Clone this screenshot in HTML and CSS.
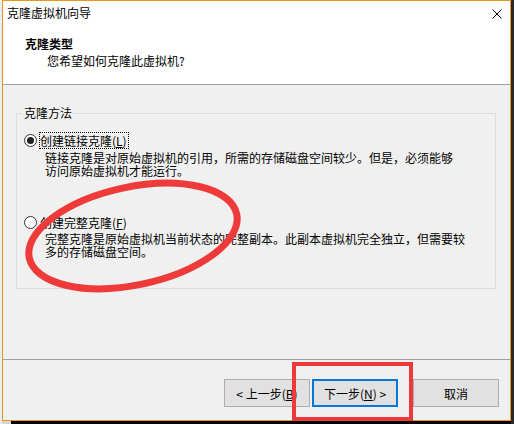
FILE: index.html
```html
<!DOCTYPE html>
<html lang="zh-CN">
<head>
<meta charset="utf-8">
<title>克隆虚拟机向导</title>
<link rel="stylesheet" href="styles.css">
</head>
<body>
<div class="screen">
  <div class="edge-left"></div>
  <div class="col">
    <div class="window">
      <div class="header">
        <div class="titlebar">
          <span class="title">克隆虚拟机向导</span>
          <svg class="close" width="10" height="10" viewBox="0 0 10 10"><path d="M0.5 0.5L9.5 9.5M9.5 0.5L0.5 9.5" stroke="#000" stroke-width="1" fill="none"/></svg>
        </div>
        <div class="head-title">克隆类型</div>
        <div class="head-sub">您希望如何克隆此虚拟机?</div>
      </div>
      <div class="content">
        <div class="group">
          <span class="legend">克隆方法</span>
          <div class="radio-row">
            <span class="radio checked"></span>
            <span class="label focus">创建链接克隆(<u>L</u>)</span>
          </div>
          <div class="desc">链接克隆是对原始虚拟机的引用，所需的存储磁盘空间较少。但是，必须能够<br>访问原始虚拟机才能运行。</div>
          <div class="radio-row second">
            <span class="radio"></span>
            <span class="label">创建完整克隆(<u>F</u>)</span>
          </div>
          <div class="desc desc2">完整克隆是原始虚拟机当前状态的完整副本。此副本虚拟机完全独立，但需要较<br>多的存储磁盘空间。</div>
        </div>
      </div>
      <div class="footer">
        <button class="btn">&lt; 上一步(<u>B</u>)</button>
        <button class="btn default">下一步(<u>N</u>) &gt;</button>
        <button class="btn cancel">取消</button>
      </div>
    </div>
    <div class="edge-bottom"></div>
  </div>
  <div class="edge-right"></div>
  <svg class="annot" width="514" height="424" viewBox="0 0 514 424">
    <ellipse cx="133" cy="236" rx="106" ry="49" transform="rotate(-12 133 236)" fill="none" stroke="#ef3a3a" stroke-width="7"/>
    <rect x="294" y="364" width="117" height="55" fill="none" stroke="#ec3a3a" stroke-width="4"/>
  </svg>
</div>
</body>
</html>
```
FILE: styles.css
```css
* { box-sizing: border-box; }
html, body { margin: 0; padding: 0; }
body {
  font-family: "Noto Sans CJK SC", "Noto Sans", sans-serif;
  font-size: 12px;
  color: #000;
  background: #000;
}
.screen {
  position: relative;
  width: 514px;
  height: 424px;
  display: flex;
  background: #000;
  overflow: hidden;
}
.edge-left { width: 2px; background: #ececec; }
.edge-right { width: 3px; background: #2b2b2b; }
.col { width: 509px; display: flex; flex-direction: column; }
.edge-bottom {
  flex: 1;
  background: linear-gradient(to right, #d6d6d6 0 9px, #000 9px);
}
.window {
  height: 421px;
  border: 1px solid #e8951c;
  background: #f0f0f0;
  display: flex;
  flex-direction: column;
}
.header {
  height: 84px;
  background: #fff;
  border-bottom: 1px solid #a0a0a0;
}
.titlebar {
  height: 24px;
  display: flex;
  align-items: center;
  justify-content: space-between;
  padding: 0 8px 0 4px;
}
.title { line-height: 24px; }
.close { display: block; margin-top: 2px; }
.head-title {
  font-weight: bold;
  line-height: 16px;
  margin-top: 11px;
  padding-left: 22px;
}
.head-sub {
  line-height: 16px;
  margin-top: 1px;
  padding-left: 44px;
}
.content {
  flex: 1;
  padding-top: 28px;
}
.group {
  position: relative;
  height: 176px;
  margin: 0 14px 0 13px;
  border: 1px solid #dcdcdc;
  padding: 18px 0 0 7px;
}
.legend {
  position: absolute;
  top: -9px;
  left: 6px;
  padding: 0 1px;
  line-height: 16px;
  background: #f0f0f0;
}
.radio-row {
  display: flex;
  align-items: center;
  height: 17px;
}
.radio-row.second { margin-top: 37px; }
.radio {
  width: 13px;
  height: 13px;
  border: 1px solid #333;
  border-radius: 50%;
  background: #fff;
  display: flex;
  align-items: center;
  justify-content: center;
  margin-right: 2px;
}
.radio.checked::after {
  content: "";
  width: 7px;
  height: 7px;
  border-radius: 50%;
  background: #222;
}
.label {
  line-height: 15px;
  border: 1px solid transparent;
  padding: 0 1px 0 0;
}
.label.focus { border: 1px dotted #000; }
.desc {
  margin-top: 2px;
  padding-left: 21px;
  line-height: 13px;
  white-space: nowrap;
}
.desc2 { margin-top: 1px; }
.footer {
  height: 61px;
  border-top: 1px solid #a0a0a0;
  display: flex;
  justify-content: flex-end;
  align-items: flex-start;
  padding: 19px 11px 0 0;
}
.btn {
  width: 86px;
  height: 28px;
  border: 1px solid #adadad;
  background: #e1e1e1;
  font-family: "Noto Sans CJK SC", "Noto Sans", sans-serif;
  font-size: 12px;
  color: #000;
  padding: 0;
  margin: 0;
}
.btn.default {
  border: 2px solid #0078d7;
  margin-left: 2px;
}
.btn.cancel { margin-left: 15px; }
.annot {
  position: absolute;
  left: 0;
  top: 0;
  pointer-events: none;
}
```
